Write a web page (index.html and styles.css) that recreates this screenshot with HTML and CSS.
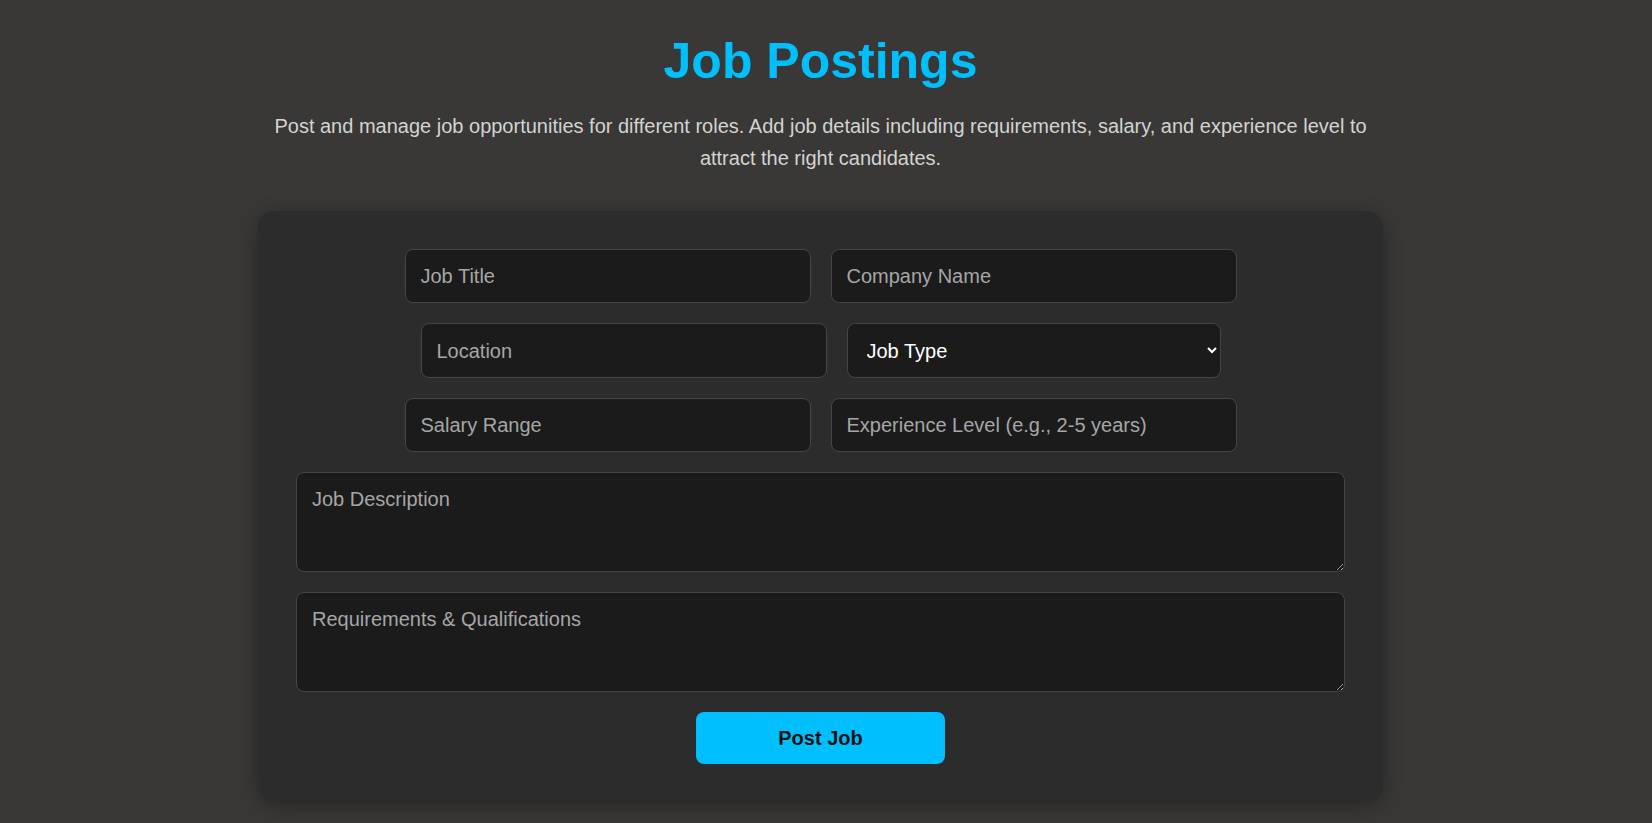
FILE: index.html
```html
<!DOCTYPE html>
<html lang="en">
<head>
<meta charset="utf-8">
<title>Job Postings</title>
<link rel="stylesheet" href="styles.css">
</head>
<body>
<main class="page">
  <h1 class="title">Job Postings</h1>
  <p class="intro">Post and manage job opportunities for different roles. Add job details including requirements, salary, and experience level to attract the right candidates.</p>
  <section class="card">
    <form class="job-form">
      <input class="field" type="text" placeholder="Job Title">
      <input class="field" type="text" placeholder="Company Name">
      <input class="field" type="text" placeholder="Location">
      <select class="field select">
        <option>Job Type</option>
        <option>Full-time</option>
        <option>Part-time</option>
        <option>Contract</option>
        <option>Internship</option>
      </select>
      <input class="field" type="text" placeholder="Salary Range">
      <input class="field" type="text" placeholder="Experience Level (e.g., 2-5 years)">
      <textarea class="field area" placeholder="Job Description"></textarea>
      <textarea class="field area" placeholder="Requirements &amp; Qualifications"></textarea>
      <button class="submit" type="button">Post Job</button>
    </form>
  </section>
</main>
</body>
</html>
```

FILE: styles.css
```css
* {
  box-sizing: border-box;
}

html, body {
  margin: 0;
  padding: 0;
}

body {
  background: #393836;
  font-family: "Liberation Sans", Arial, sans-serif;
  color: #d6d6d6;
  padding-right: 11px;
}

.page {
  width: 1125px;
  margin: 0 auto;
  padding: 32px 0 40px;
}

.title {
  margin: 0;
  text-align: center;
  font-size: 50px;
  font-weight: 700;
  line-height: normal;
  color: #00bfff;
}

.intro {
  margin: 20px 0 37px;
  text-align: center;
  font-size: 20px;
  line-height: 1.6;
  color: #d3d3d3;
}

.card {
  background: #2c2c2c;
  border-radius: 16px;
  padding: 38px;
  box-shadow: 0 4px 20px rgba(0, 0, 0, 0.3);
}

.job-form {
  display: flex;
  flex-wrap: wrap;
  justify-content: center;
  gap: 20px;
}

.field {
  width: 406px;
  padding: 15px;
  background: #1b1b1b;
  border: 1px solid #454545;
  border-radius: 8px;
  color: #ffffff;
  font-family: "Liberation Sans", Arial, sans-serif;
  font-size: 20px;
  line-height: 22px;
  outline: none;
}

.field::placeholder {
  color: #a6a6a6;
}

.select {
  width: 374px;
  height: 55px;
  padding: 0 15px;
}

.area {
  width: 100%;
  height: 100px;
  resize: vertical;
}

.submit {
  width: 249px;
  height: 52px;
  border: none;
  border-radius: 8px;
  background: #00bfff;
  color: #111111;
  font-family: "Liberation Sans", Arial, sans-serif;
  font-size: 20px;
  font-weight: 700;
  cursor: pointer;
}
```
